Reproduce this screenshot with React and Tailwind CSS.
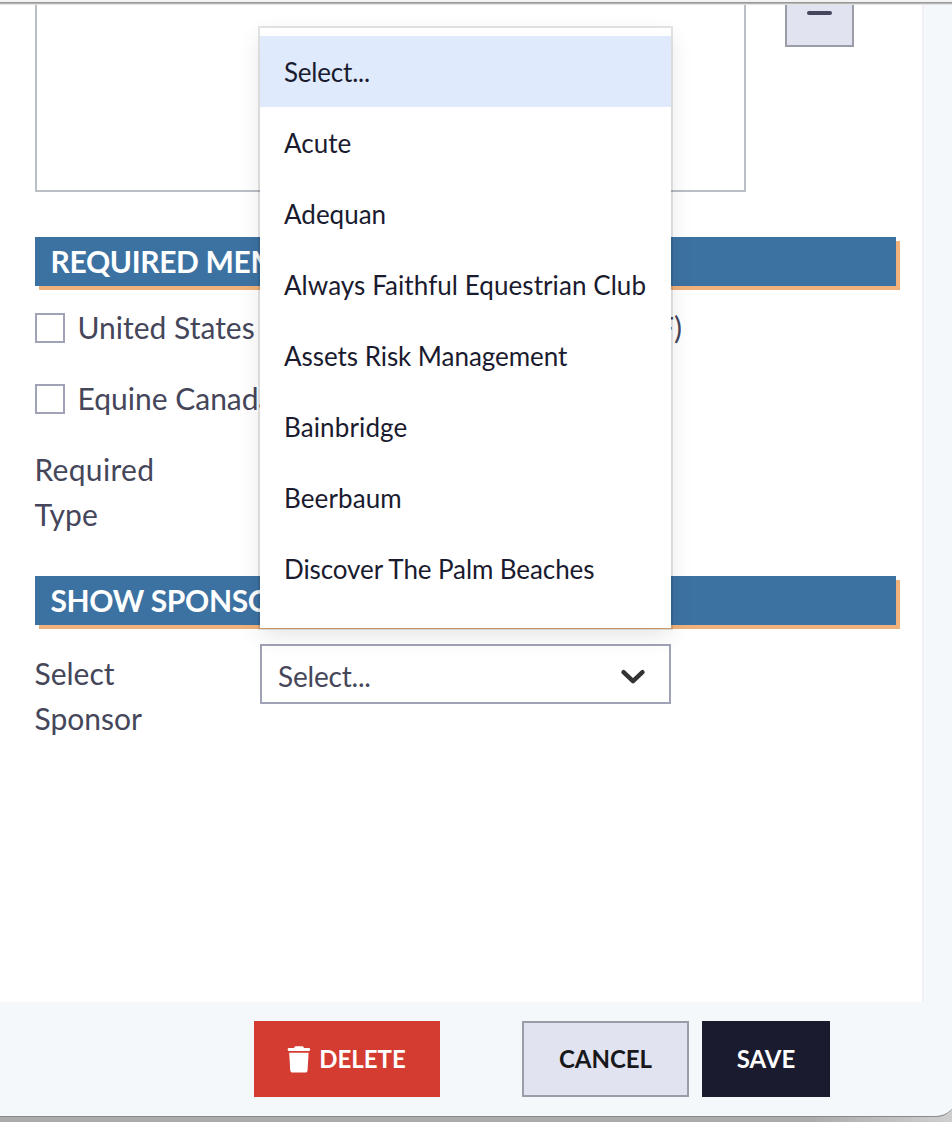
const options = [
  { label: 'Select...', tracking: 'tracking-[-0.2px]' },
  { label: 'Acute', tracking: 'tracking-normal' },
  { label: 'Adequan', tracking: 'tracking-normal' },
  { label: 'Always Faithful Equestrian Club', tracking: 'tracking-[0.07px]' },
  { label: 'Assets Risk Management', tracking: 'tracking-[-0.05px]' },
  { label: 'Bainbridge', tracking: 'tracking-[0.12px]' },
  { label: 'Beerbaum', tracking: 'tracking-[0.12px]' },
  { label: 'Discover The Palm Beaches', tracking: 'tracking-[-0.09px]' },
];

function SectionHeading({ children }) {
  return (
    <h2 className="h-[49px] w-[861px] bg-[#3c72a2] pl-[15.5px] text-[30px] leading-[49px] font-bold tracking-[-0.35px] text-white shadow-[4px_4px_0_#f0b27a]">
      {children}
    </h2>
  );
}

function CheckRow({ children }) {
  return (
    <label className="flex h-[45px] items-center gap-[13px]">
      <span className="size-[30px] shrink-0 border-2 border-[#a0a3b8] bg-white" />
      <span className="flex w-[604px] justify-between whitespace-nowrap">{children}</span>
    </label>
  );
}

function SponsorSelect() {
  return (
    <div className="relative h-[60px] w-[411px]">
      <div className="flex h-full items-center justify-between border-2 border-[#a0a3b8] bg-white pr-[23px] pl-4 text-[28px]">
        <span className="mt-[5px] tracking-[-0.2px]">Select...</span>
        <svg className="mt-[6px] h-[16px] w-[26px]" viewBox="0 0 26 16" fill="none" stroke="#333" strokeWidth="4.4" strokeLinecap="round" strokeLinejoin="round">
          <path d="M3.500 3.200 L13 12.200 L22.500 3.200" />
        </svg>
      </div>
      <ul className="absolute bottom-full left-0 mb-4 h-[600px] w-full overflow-hidden bg-white pt-2 text-[26px] text-[#1a1b2f] shadow-[0_0_0_2px_rgba(0,0,0,0.1),0_8px_22px_rgba(0,0,0,0.1)]">
        {options.map(({ label, tracking }, i) => (
          <li
            key={label}
            className={`flex h-[71px] items-center pt-px pl-6 whitespace-nowrap ${tracking} ${i === 0 ? 'bg-[#dfeafd]' : ''}`}
          >
            {label}
          </li>
        ))}
      </ul>
    </div>
  );
}

function TrashIcon() {
  return (
    <svg className="h-[27px] w-[24px]" viewBox="0 0 24 27" fill="#fff">
      <path d="M8 0.300h8l1 1.700h4.600c1 0 1.600.6 1.600 1.500S22.600 5 21.600 5H2.200C1.200 5 .600 4.400.600 3.500S1.200 2 2.200 2H7z" />
      <path d="M2.200 6.800h19.400l-1 17.200c-.1 1.700-1 2.600-2.600 2.600H5.800c-1.600 0-2.500-.9-2.600-2.600z" />
    </svg>
  );
}

export default function App() {
  return (
    <div className="h-[1122px] w-[952px] overflow-hidden bg-gradient-to-r from-[#ababab] from-85% to-[#cfcfcf] font-['Lato',sans-serif] text-[30px] leading-[45px] text-[#45465a]">
      <div className="flex h-[1117px] w-[956px] flex-col rounded-br-[20px] border-b border-[#8a8a8a] bg-[#f4f8fb]">
        <div className="h-[2px] shrink-0 bg-[#f3f3f3]" />
        <div className="h-px shrink-0 bg-[#999]" />
        <div className="h-px shrink-0 bg-[#b5b5b5]" />
        <div className="h-px shrink-0 bg-[#e3e3e3]" />
        <div className="flex h-[997px] w-[924px] shrink-0 flex-col border-r-2 border-[#f0f1f6] bg-white pl-[35px]">
          <div className="flex shrink-0 items-start gap-[39px]">
            <div className="h-[187px] w-[711px] border-2 border-t-0 border-[#babec5]" />
            <div className="flex h-[42px] w-[69px] justify-center border-2 border-t-0 border-[#9a9da8] bg-[#e1e3f1] pt-[6px]">
              <div className="h-1 w-[25px] rounded-full bg-[#45465a]" />
            </div>
          </div>
          <div className="mt-[45px]">
            <SectionHeading>REQUIRED MEMBERSHIPS</SectionHeading>
          </div>
          <div className="mt-[19px] flex flex-col gap-[26px]">
            <CheckRow>
              <span className="-ml-[0.5px]">United States Equestrian Federation</span>
              <span>(USEF)</span>
            </CheckRow>
            <CheckRow>
              <span className="-ml-[0.5px]">Equine Canada (EC)</span>
            </CheckRow>
            <div className="w-[190px]">
              <span className="-ml-[0.5px] tracking-[0.3px]">Required</span>
              <br />
              <span className="-ml-[0.5px]">Type</span>
            </div>
          </div>
          <div className="mt-[39px]">
            <SectionHeading>SHOW SPONSOR</SectionHeading>
          </div>
          <div className="mt-[19px] flex">
            <div className="mt-[7px] -ml-[0.5px] w-[225.5px]">
              Select
              <br />
              Sponsor
            </div>
            <SponsorSelect />
          </div>
        </div>
        <div className="flex pt-[19px] pl-[254px] text-2xl font-bold">
          <button className="flex h-[76px] w-[186px] items-center justify-center gap-2 bg-[#d43c31] pr-px text-white">
            <TrashIcon />
            DELETE
          </button>
          <button className="ml-[82px] h-[76px] w-[167px] border-2 border-[#9a9da8] bg-[#e1e3f1] text-[#18181b]">
            CANCEL
          </button>
          <button className="ml-[13px] h-[76px] w-[128px] bg-[#1a1b2f] text-white">SAVE</button>
        </div>
      </div>
    </div>
  );
}
